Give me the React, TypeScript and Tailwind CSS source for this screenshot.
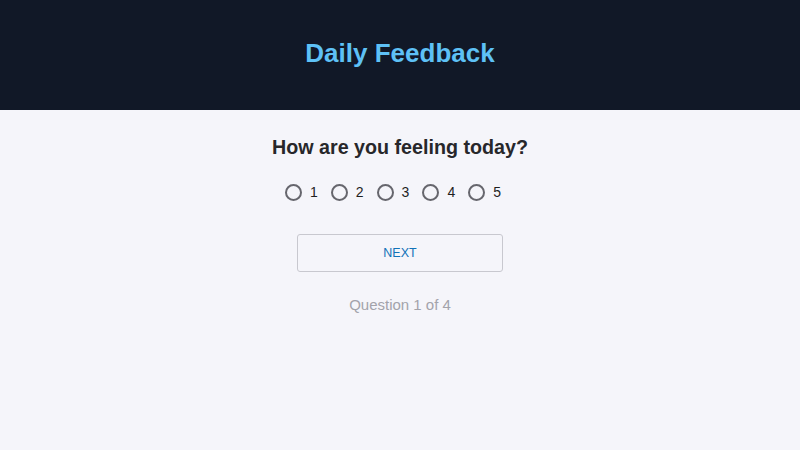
import { useState } from "react";

export default function App() {
  const [mood, setMood] = useState<number | null>(null);

  return (
    <div className="min-h-[450px] bg-[#f5f5fa] font-['Liberation_Sans',Arial,sans-serif]">
      {/* Header */}
      <header className="h-[110px] bg-[#111827] flex items-center justify-center">
        <h1 className="text-[26px] font-bold text-[#5ec1f6] pb-[4px]">Daily Feedback</h1>
      </header>

      {/* Question */}
      <main className="flex flex-col items-center">
        <h2 className="mt-[25px] text-[19.7px] font-bold text-[#27272a] leading-[24px]">
          How are you feeling today?
        </h2>

        <div className="mt-[23px] flex items-center gap-[13px] pr-[14px]">
          {[1, 2, 3, 4, 5].map((n) => (
            <label key={n} className="flex items-center gap-[8px] cursor-pointer">
              <span
                onClick={() => setMood(n)}
                className="w-[17px] h-[17px] rounded-full border-2 border-[#66666d] flex items-center justify-center"
              >
                {mood === n && <span className="w-[8px] h-[8px] rounded-full bg-[#0a6ebd]" />}
              </span>
              <span className="text-[14px] text-[#1f1f1f]">{n}</span>
            </label>
          ))}
        </div>

        <button className="mt-[31px] w-[206px] h-[38px] border border-[#c8c8cf] rounded-[3px] text-[12.5px] font-medium text-[#1272b8]">
          NEXT
        </button>

        <p className="mt-[22px] text-[15px] text-[#a3a3ab]">Question 1 of 4</p>
      </main>
    </div>
  );
}
